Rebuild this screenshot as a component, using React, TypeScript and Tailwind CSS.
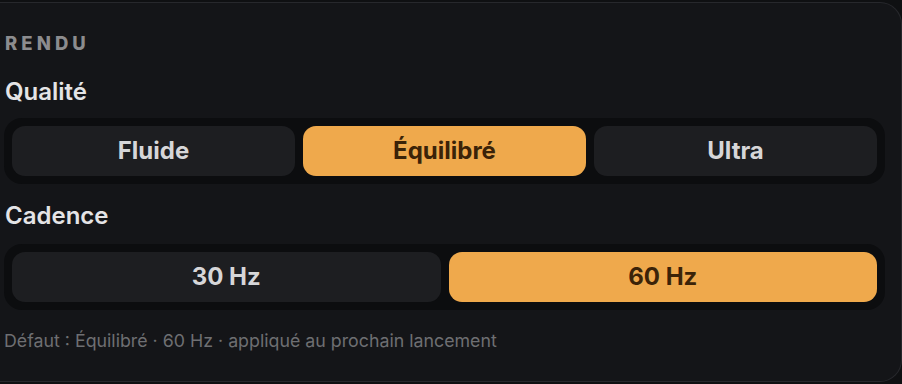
const qualities = ["Fluide", "Équilibré", "Ultra"];
const rates = ["30 Hz", "60 Hz"];

function Segmented({
    options,
    selected,
    cols,
}: {
    options: string[];
    selected: string;
    cols: string;
}) {
    return (
        <div className={`grid ${cols} gap-2 rounded-[18px] bg-[#0c0d0f] p-2`}>
            {options.map((opt) => {
                const active = opt === selected;
                return (
                    <button
                        key={opt}
                        className={
                            active
                                ? "h-[50px] rounded-[13px] bg-[#efa94c] text-[24px] font-bold text-[#3b2308]"
                                : "h-[50px] rounded-[13px] bg-[#1d1e21] text-[24px] font-bold text-[#d6d6d8]"
                        }
                    >
                        {opt}
                    </button>
                );
            })}
        </div>
    );
}

export default function App() {
    return (
        <div
            className="h-[384px] w-full bg-[#0f1012] pt-[2px]"
            style={{ fontFamily: "Inter, 'Noto Sans', sans-serif" }}
        >
            <div className="flex h-[380px] flex-col rounded-r-[22px] border-y border-r border-[#27282c] bg-[#141518] pl-[4px] pr-[16px]">
                <p className="mt-[30px] pl-px text-[18.5px] leading-[20px] font-extrabold tracking-[0.22em] text-[#8c8c8e]">
                    RENDU
                </p>
                <p className="mt-[27px] pl-px text-[24px] leading-[24px] font-semibold text-[#e4e4e6]">
                    Qualité
                </p>
                <div className="mt-[14px]">
                    <Segmented options={qualities} selected="Équilibré" cols="grid-cols-3" />
                </div>
                <p className="mt-[20px] pl-px text-[24px] leading-[24px] font-semibold text-[#e4e4e6]">
                    Cadence
                </p>
                <div className="mt-[16px]">
                    <Segmented options={rates} selected="60 Hz" cols="grid-cols-2" />
                </div>
                <p className="mt-[21px] text-[17.8px] leading-[20px] text-[#6e6f72]">
                    Défaut : Équilibré · 60 Hz · appliqué au prochain lancement
                </p>
            </div>
        </div>
    );
}
